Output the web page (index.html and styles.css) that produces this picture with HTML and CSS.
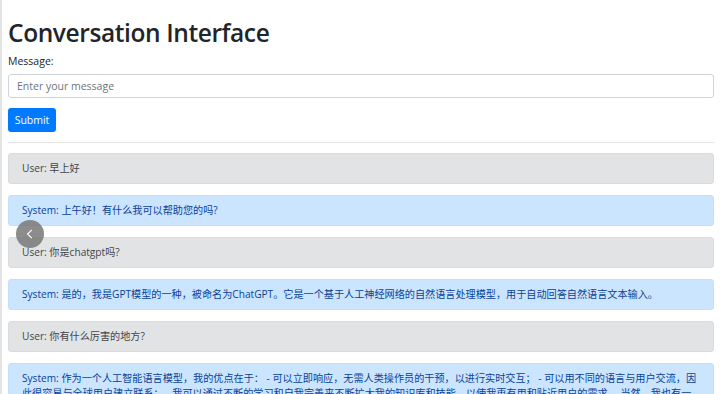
FILE: index.html
```html
<!DOCTYPE html>
<html lang="zh">
<head>
<meta charset="utf-8">
<title>Conversation Interface</title>
<link rel="stylesheet" href="styles.css">
</head>
<body>
<div class="page">
  <h1 class="title">Conversation Interface</h1>
  <form class="form">
    <label class="label" for="msg">Message:</label>
    <input class="input" id="msg" type="text" placeholder="Enter your message">
    <button class="btn" type="button">Submit</button>
  </form>
  <hr class="rule">
  <div class="messages">
    <div class="msg msg-user">User: 早上好</div>
    <div class="msg msg-system">System: 上午好！有什么我可以帮助您的吗?</div>
    <div class="msg msg-user">User: 你是chatgpt吗?</div>
    <div class="msg msg-system">System: 是的，我是GPT模型的一种，被命名为ChatGPT。它是一个基于人工神经网络的自然语言处理模型，用于自动回答自然语言文本输入。</div>
    <div class="msg msg-user">User: 你有什么厉害的地方?</div>
    <div class="msg msg-system">System: 作为一个人工智能语言模型，我的优点在于： - 可以立即响应，无需人类操作员的干预，以进行实时交互； - 可以用不同的语言与用户交流，因此很容易与全球用户建立联系； - 我可以通过不断的学习和自我完善来不断扩大我的知识库和技能，以使我更有用和贴近用户的需求。 当然，我也有一些局限性，例如无法理解复杂的情感和语境。</div>
  </div>
  <button class="back" type="button" aria-label="Back">
    <svg width="14" height="14" viewBox="0 0 14 14"><path d="M8.8 2.8 L4.6 7 L8.8 11.2" fill="none" stroke="#fff" stroke-width="1.1"/></svg>
  </button>
</div>
</body>
</html>
```
FILE: styles.css
```css
html, body {
  margin: 0;
  padding: 0;
  background: #fff;
}
body {
  border-left: 2px solid #e4e4e4;
  font-family: "Open Sans", "Noto Sans CJK SC", sans-serif;
  color: #212529;
  overflow: hidden;
}
.page {
  position: relative;
  padding: 16px 6px 0 6px;
}
.title {
  margin: 0;
  font-size: 24.5px;
  font-weight: 600;
  letter-spacing: -0.4px;
  line-height: 34px;
  color: #212529;
}
.form {
  display: flex;
  flex-direction: column;
  align-items: flex-start;
}
.label {
  margin-top: 3px;
  font-size: 10.5px;
  line-height: 16px;
  color: #212529;
}
.input {
  box-sizing: border-box;
  margin-top: 5px;
  width: 100%;
  height: 24px;
  padding: 0 8px;
  border: 1px solid #ced4da;
  border-radius: 3px;
  font-family: inherit;
  font-size: 10.5px;
  color: #495057;
}
.input::placeholder {
  color: #6c757d;
}
.btn {
  margin-top: 10px;
  width: 48px;
  height: 24px;
  padding: 0;
  border: 0;
  border-radius: 3px;
  background: #007bff;
  color: #fff;
  font-family: inherit;
  font-size: 10.5px;
}
.rule {
  margin: 10px 0 10px;
  border: 0;
  border-top: 1px solid #e6e6e6;
}
.messages {
  display: flex;
  flex-direction: column;
  gap: 11px;
}
.msg {
  padding: 7px 13px;
  border: 1px solid transparent;
  border-radius: 3px;
  font-size: 10.15px;
  line-height: 15px;
}
.msg-user {
  background: #e2e3e5;
  border-color: #dadbdd;
  color: #41464b;
}
.msg-system {
  background: #cce5ff;
  border-color: #c2dffd;
  color: #084298;
}
.back {
  position: absolute;
  left: 14px;
  top: 220px;
  width: 28px;
  height: 28px;
  padding: 0;
  border: 0;
  border-radius: 50%;
  background: rgba(120, 120, 120, 0.85);
  display: flex;
  align-items: center;
  justify-content: center;
}
```
